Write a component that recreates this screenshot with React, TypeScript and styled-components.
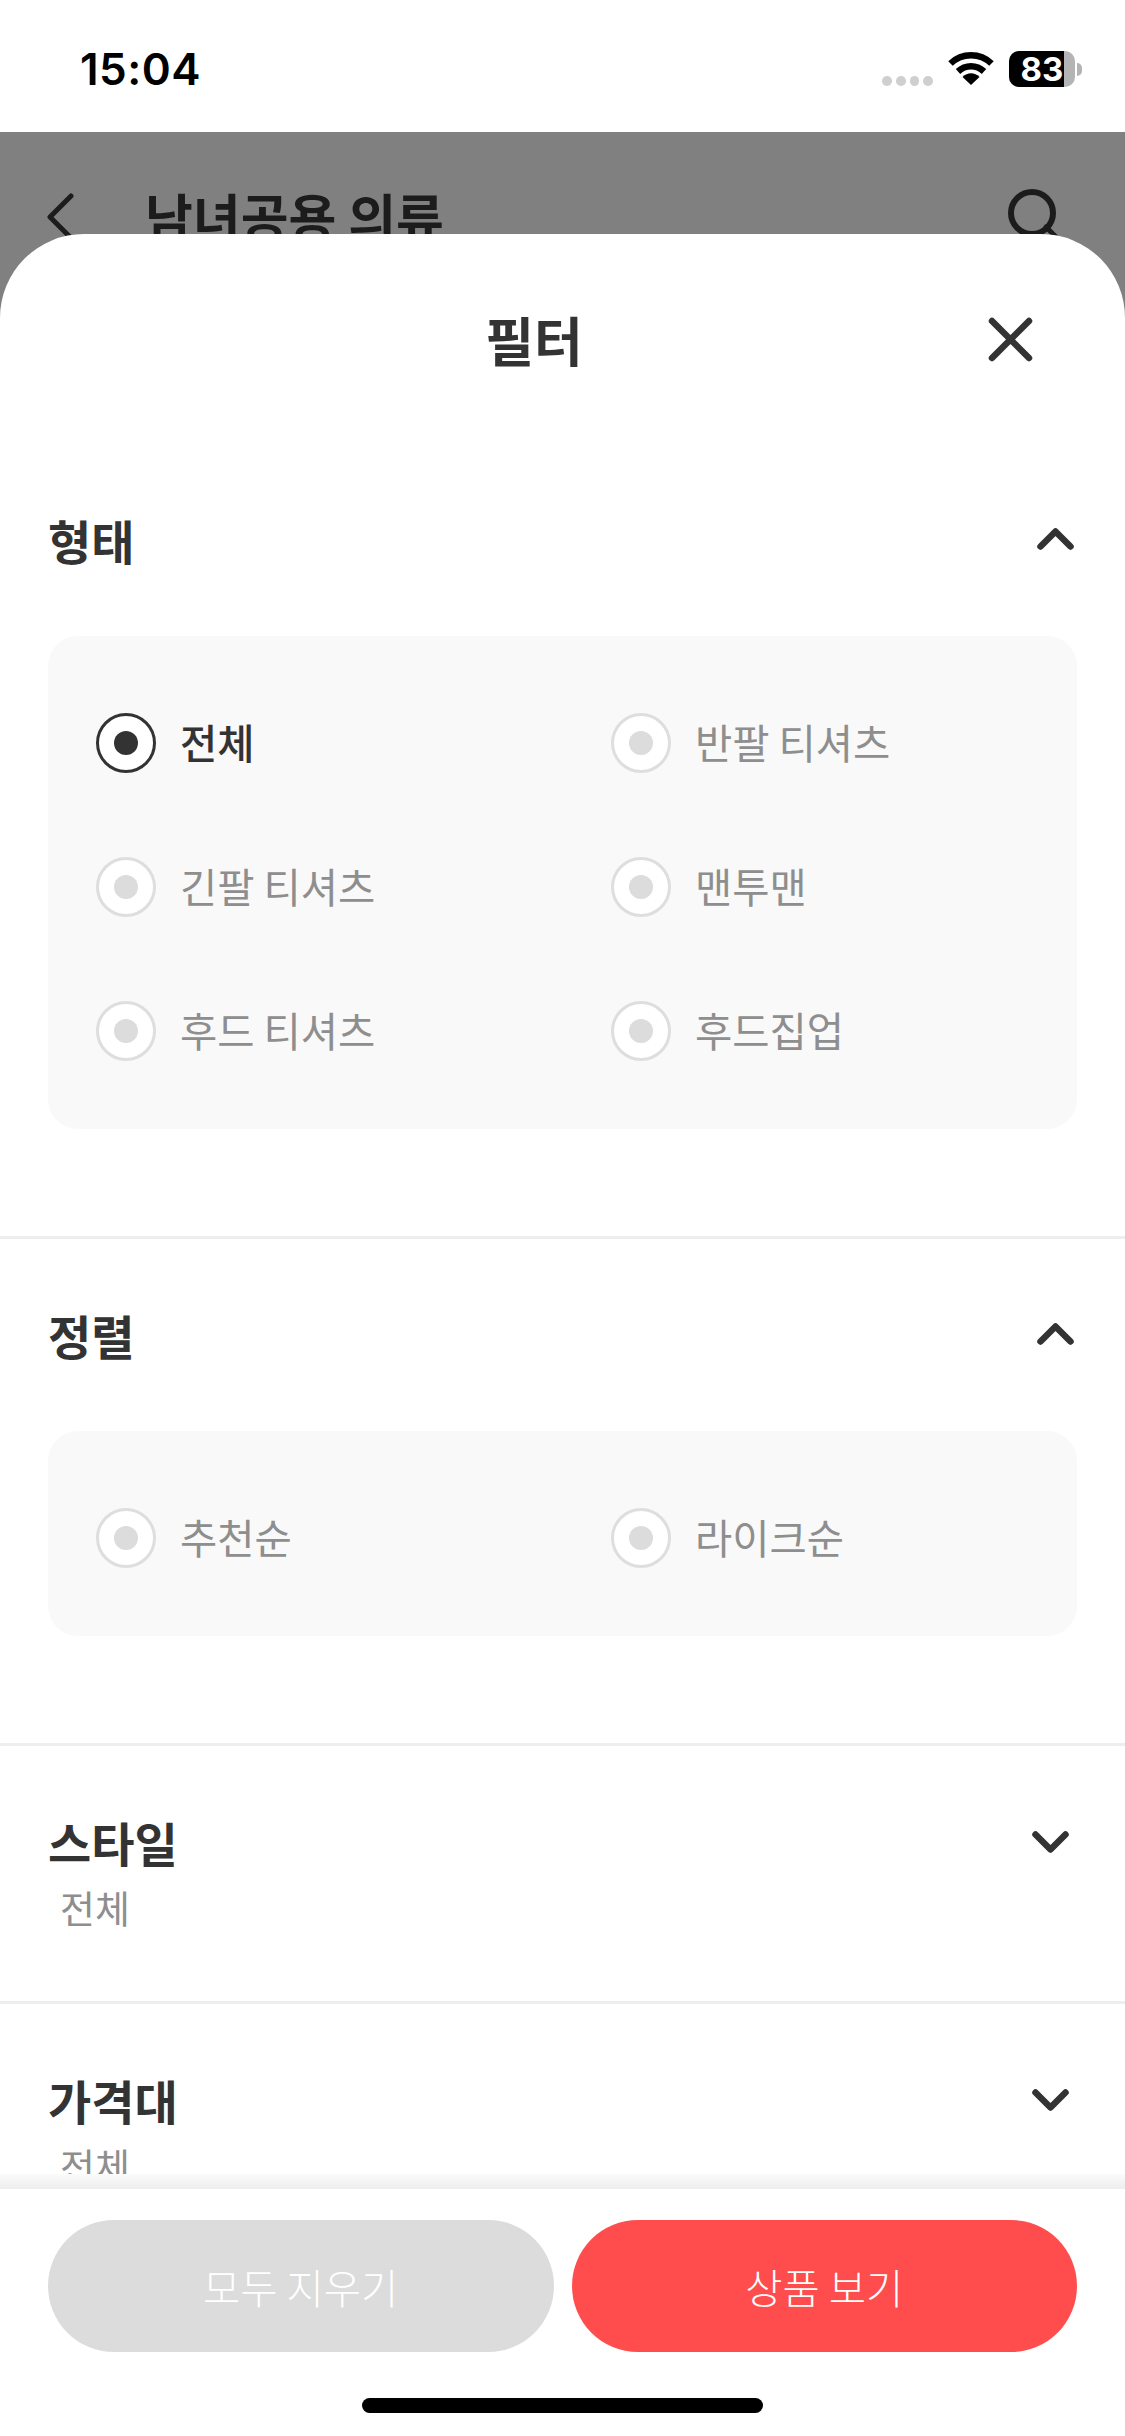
import styled, { createGlobalStyle } from "styled-components";

const GlobalStyle = createGlobalStyle`
  html, body { margin: 0; padding: 0; background: #fff; }
  * { box-sizing: border-box; }
  body { font-family: "Noto Sans CJK KR", "Noto Sans", sans-serif; }
`;

const Page = styled.div`
  position: relative;
  width: 1125px;
  height: 2436px;
  overflow: hidden;
  background: #808080;
`;

const StatusBar = styled.div`
  height: 132px;
  background: #fff;
  display: flex;
  align-items: flex-start;
  padding: 51px 43px 0 80px;
`;

const Time = styled.span`
  font-family: Inter, "Noto Sans", sans-serif;
  font-size: 44px;
  line-height: 36px;
  font-weight: 600;
  color: #000;
  letter-spacing: 0.5px;
`;

const StatusIcons = styled.div`
  margin-left: auto;
  display: flex;
  align-items: flex-start;
`;

const SignalDots = styled.div`
  display: flex;
  gap: 4px;
  margin-top: 25px;
  margin-right: 15px;
`;

const SignalDot = styled.i`
  width: 9.75px;
  height: 9.75px;
  border-radius: 50%;
  background: #cfcfcf;
`;

const Battery = styled.div`
  position: relative;
  width: 66px;
  height: 36px;
  margin-left: 15px;
  border-radius: 10px;
  background: #b4b4b4;
`;

const BatteryFill = styled.div`
  height: 100%;
  border-radius: 10px 0 0 10px;
  background: #000;
`;

const BatteryText = styled.span`
  position: absolute;
  inset: 0;
  text-align: center;
  font-family: Inter, sans-serif;
  font-size: 33px;
  line-height: 36px;
  font-weight: 700;
  color: #fff;
`;

const BatteryNub = styled.i`
  width: 5px;
  height: 13px;
  margin: 12px 0 0 2px;
  border-radius: 0 7px 7px 0;
  background: #b4b4b4;
`;

const BehindHeader = styled.div`
  height: 102px;
  display: flex;
  align-items: flex-start;
  padding: 57px 57px 0 46px;
  color: #1c1c1c;
`;

const BackIcon = styled.div`
  display: flex;
  margin-top: 4px;
`;

const BehindTitle = styled.span`
  margin-left: 71px;
  margin-top: -5px;
  font-size: 52px;
  line-height: 64px;
  font-weight: 700;
  white-space: nowrap;
`;

const BehindSearch = styled.div`
  display: flex;
  margin-left: auto;
`;

const Sheet = styled.div`
  position: absolute;
  left: 0;
  right: 0;
  top: 234px;
  bottom: 0;
  display: flex;
  flex-direction: column;
  background: #fff;
  border-radius: 84px 84px 0 0;
  overflow: hidden;
`;

const SheetHeader = styled.div`
  flex: none;
  height: 210px;
  display: flex;
  align-items: flex-start;
  padding: 75px 92px 0 80px;
`;

const SheetTitle = styled.h1`
  flex: 1;
  margin: 0;
  text-align: center;
  font-size: 53px;
  line-height: 60px;
  font-weight: 700;
  color: #333;
`;

const CloseButton = styled.div`
  display: flex;
  margin-top: 8px;
`;

const ScrollArea = styled.div`
  flex: 1;
  min-height: 0;
  overflow: hidden;
`;

const Section = styled.section<{ $bottom: number }>`
  padding: 66px 48px ${(p) => p.$bottom}px;
  border-bottom: 3px solid #eeeeee;
`;

const SectionHead = styled.div`
  height: 64px;
  display: flex;
  align-items: center;
  justify-content: space-between;
`;

const SectionTitle = styled.h2`
  margin: 0;
  padding-bottom: 5px;
  font-size: 47px;
  line-height: 64px;
  font-weight: 700;
  color: #333;
`;

const ChevronBox = styled.div<{ $open: boolean }>`
  display: flex;
  margin-right: ${(p) => (p.$open ? 3 : 8)}px;
  margin-top: ${(p) => (p.$open ? -7 : -4)}px;
`;

const SubValue = styled.div`
  margin: 6px 0 0 12px;
  font-size: 38px;
  line-height: 50px;
  color: #8e8e8e;
`;

const Panel = styled.div`
  margin-top: 62px;
  padding: 35px 0 26px 48px;
  display: grid;
  grid-template-columns: 515px 1fr;
  background: #f9f9f9;
  border-radius: 30px;
`;

const Option = styled.div`
  height: 144px;
  display: flex;
  align-items: center;
  gap: 24px;
`;

const Radio = styled.div<{ $on: boolean }>`
  width: 60px;
  height: 60px;
  display: flex;
  align-items: center;
  justify-content: center;
  border-radius: 50%;
  background: #fff;
  border: 3px solid ${(p) => (p.$on ? "#333" : "#dedede")};

  &::after {
    content: "";
    width: 24px;
    height: 24px;
    border-radius: 50%;
    background: ${(p) => (p.$on ? "#333" : "#dcdcdc")};
  }
`;

const OptionLabel = styled.span<{ $on: boolean }>`
  padding-bottom: 2px;
  font-size: 40.5px;
  line-height: 50px;
  font-weight: ${(p) => (p.$on ? 500 : 400)};
  color: ${(p) => (p.$on ? "#333" : "#8e8e8e")};
`;

const Footer = styled.div`
  flex: none;
  position: relative;
  height: 247px;
  padding: 31px 48px 0;
  background: #fff;

  &::before {
    content: "";
    position: absolute;
    left: 0;
    right: 0;
    top: -15px;
    height: 15px;
    background: linear-gradient(#fbfbfb, #ededed);
  }
`;

const ButtonRow = styled.div`
  display: flex;
  gap: 18px;
`;

const ActionButton = styled.button<{ $primary?: boolean }>`
  flex: 1;
  height: 132px;
  border: 0;
  padding: 0;
  border-radius: 66px;
  background: ${(p) => (p.$primary ? "#ff4d4d" : "#dcdcdc")};
  color: #fff;
  font-family: inherit;
  font-size: 40.5px;
  font-weight: 300;
`;

const HomeBar = styled.div`
  width: 401px;
  height: 15px;
  margin: 46px auto 0;
  border-radius: 8px;
  background: #000;
`;

const Chevron = ({ up }: { up?: boolean }) => (
  <svg width="37" height="22" viewBox="0 0 37 22" fill="none">
    <path
      d={up ? "M3.5 18.5 L18.5 3.5 L33.5 18.5" : "M3.5 3.5 L18.5 18.5 L33.5 3.5"}
      stroke="#333"
      strokeWidth="6.5"
      strokeLinecap="round"
      strokeLinejoin="round"
    />
  </svg>
);

const forms = [
  { label: "전체", on: true },
  { label: "반팔 티셔츠" },
  { label: "긴팔 티셔츠" },
  { label: "맨투맨" },
  { label: "후드 티셔츠" },
  { label: "후드집업" },
];

const sorts = [{ label: "추천순" }, { label: "라이크순" }];

const Options = ({ items }: { items: { label: string; on?: boolean }[] }) => (
  <Panel>
    {items.map((item) => (
      <Option key={item.label}>
        <Radio $on={!!item.on} />
        <OptionLabel $on={!!item.on}>{item.label}</OptionLabel>
      </Option>
    ))}
  </Panel>
);

export default function App() {
  return (
    <Page>
      <GlobalStyle />
      <StatusBar>
        <Time>15:04</Time>
        <StatusIcons>
          <SignalDots>
            <SignalDot />
            <SignalDot />
            <SignalDot />
            <SignalDot />
          </SignalDots>
          <svg width="46" height="34" viewBox="0 0 46 34" fill="none">
            <path d="M2.5 12.5 C14 1.5 32 1.5 43.5 12.5" stroke="#000" strokeWidth="6.5" />
            <path d="M10 20.5 C17.5 13.5 28.5 13.5 36 20.5" stroke="#000" strokeWidth="6.5" />
            <path d="M14.5 26 C19.5 21 26.5 21 31.5 26 L23 34 Z" fill="#000" />
          </svg>
          <Battery>
            <BatteryFill style={{ width: "83%" }} />
            <BatteryText>83</BatteryText>
          </Battery>
          <BatteryNub />
        </StatusIcons>
      </StatusBar>

      <BehindHeader>
        <BackIcon>
          <svg width="28" height="48" viewBox="0 0 28 48" fill="none">
            <path d="M25 3 L4 24 L25 45" stroke="#1c1c1c" strokeWidth="5" strokeLinecap="round" strokeLinejoin="round" />
          </svg>
        </BackIcon>
        <BehindTitle>남녀공용 의류</BehindTitle>
        <BehindSearch>
          <svg width="60" height="60" viewBox="0 0 60 60" fill="none">
            <circle cx="24" cy="24" r="21" stroke="#1c1c1c" strokeWidth="6" />
            <path d="M38 38 L55 55" stroke="#1c1c1c" strokeWidth="5" strokeLinecap="round" />
          </svg>
        </BehindSearch>
      </BehindHeader>

      <Sheet>
        <SheetHeader>
          <SheetTitle>필터</SheetTitle>
          <CloseButton>
            <svg width="45" height="45" viewBox="0 0 45 45" fill="none">
              <path d="M4 4 L41 41 M41 4 L4 41" stroke="#333" strokeWidth="6.5" strokeLinecap="round" />
            </svg>
          </CloseButton>
        </SheetHeader>

        <ScrollArea>
          <Section $bottom={107}>
            <SectionHead>
              <SectionTitle>형태</SectionTitle>
              <ChevronBox $open>
                <Chevron up />
              </ChevronBox>
            </SectionHead>
            <Options items={forms} />
          </Section>
          <Section $bottom={107}>
            <SectionHead>
              <SectionTitle>정렬</SectionTitle>
              <ChevronBox $open>
                <Chevron up />
              </ChevronBox>
            </SectionHead>
            <Options items={sorts} />
          </Section>
          <Section $bottom={69}>
            <SectionHead>
              <SectionTitle>스타일</SectionTitle>
              <ChevronBox $open={false}>
                <Chevron />
              </ChevronBox>
            </SectionHead>
            <SubValue>전체</SubValue>
          </Section>
          <Section $bottom={69}>
            <SectionHead>
              <SectionTitle>가격대</SectionTitle>
              <ChevronBox $open={false}>
                <Chevron />
              </ChevronBox>
            </SectionHead>
            <SubValue>전체</SubValue>
          </Section>
        </ScrollArea>

        <Footer>
          <ButtonRow>
            <ActionButton>모두 지우기</ActionButton>
            <ActionButton $primary>상품 보기</ActionButton>
          </ButtonRow>
          <HomeBar />
        </Footer>
      </Sheet>
    </Page>
  );
}
